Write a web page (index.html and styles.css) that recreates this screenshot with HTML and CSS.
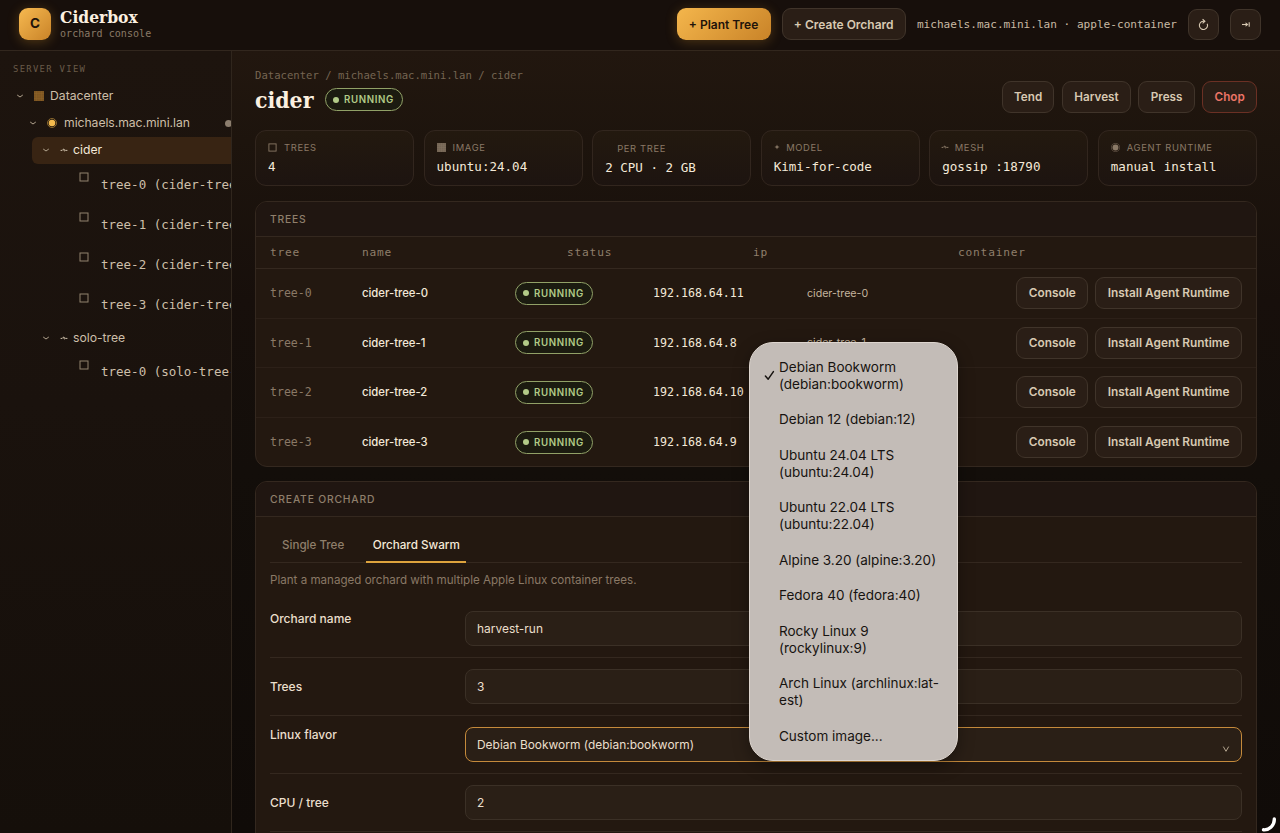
FILE: index.html
```html
<!DOCTYPE html>
<html lang="en">
<head>
<meta charset="utf-8">
<title>Ciderbox</title>
<link rel="stylesheet" href="styles.css">
</head>
<body>
<svg class="defs" width="0" height="0">
  <symbol id="chev" viewBox="0 0 8 8"><path d="M1.2 3 4 5 6.8 3" fill="none" stroke="currentColor" stroke-width="1"/></symbol>
  <symbol id="box" viewBox="0 0 10 10"><rect x="1" y="1" width="8" height="8" fill="none" stroke="currentColor" stroke-width="1"/></symbol>
  <symbol id="grid" viewBox="0 0 10 10"><rect width="10" height="10" fill="currentColor" opacity=".8"/><path d="M0 2.5H10M0 5H10M0 7.5H10M2.5 0V10M5 0V10M7.5 0V10" stroke="currentColor" stroke-width=".6" opacity=".7"/></symbol>
  <symbol id="wave" viewBox="0 0 8 8"><path d="M.6 4.4H2.2L3 3.4 4.6 4.9 5.4 4.4H7.4M3.4 3 5 4.2" fill="none" stroke="currentColor" stroke-width="1"/></symbol>
  <symbol id="orb" viewBox="0 0 10 10"><circle cx="5" cy="5" r="4.5" fill="none" stroke="currentColor" stroke-width=".8" opacity=".65"/><circle cx="5" cy="5" r="3.3" fill="currentColor"/></symbol>
  <symbol id="star" viewBox="0 0 8 8"><path d="M4 1.4 4.7 3.3 6.6 4 4.7 4.7 4 6.6 3.3 4.7 1.4 4 3.3 3.3Z" fill="currentColor"/></symbol>
</svg>
<header class="topbar">
  <div class="logo">C</div>
  <div class="brand"><div class="brand-name">Ciderbox</div><div class="brand-sub">orchard console</div></div>
  <div class="top-actions">
    <button class="btn primary">+ Plant Tree</button>
    <button class="btn create">+ Create Orchard</button>
    <span class="host">michaels.mac.mini.lan · apple-container</span>
    <button class="btn icon"><svg width="13" height="13" viewBox="0 0 13 13"><path d="M10.2 5.7A4.1 4.1 0 1 1 6 3.3H7.6M5.6 1.1 7.9 3.3 5.6 5.4" fill="none" stroke="currentColor" stroke-width="1.1"/></svg></button>
    <button class="btn icon"><svg width="10" height="10" viewBox="0 0 10 10"><path d="M1 5.5H6" fill="none" stroke="currentColor" stroke-width="1.1"/><path d="M4.6 3.2 7.4 5.5 4.6 7.8Z" fill="currentColor"/><path d="M8.2 3.2V7.8" stroke="currentColor" stroke-width="1.1"/></svg></button>
  </div>
</header>
<div class="shell">
  <aside class="sidebar">
    <div class="side-title">SERVER VIEW</div>
    <div class="node l0"><svg class="chev"><use href="#chev"/></svg><svg class="ico amber"><use href="#grid"/></svg><span>Datacenter</span></div>
    <div class="node l1"><svg class="chev"><use href="#chev"/></svg><svg class="ico sun"><use href="#orb"/></svg><span>michaels.mac.mini.lan</span><i class="state"></i></div>
    <div class="node l2 selected"><svg class="chev"><use href="#chev"/></svg><svg class="wave"><use href="#wave"/></svg><span>cider</span></div>
    <div class="leaf"><svg><use href="#box"/></svg><span>tree-0 (cider-tree-0)</span></div>
    <div class="leaf"><svg><use href="#box"/></svg><span>tree-1 (cider-tree-1)</span></div>
    <div class="leaf"><svg><use href="#box"/></svg><span>tree-2 (cider-tree-2)</span></div>
    <div class="leaf"><svg><use href="#box"/></svg><span>tree-3 (cider-tree-3)</span></div>
    <div class="node l2"><svg class="chev"><use href="#chev"/></svg><svg class="wave"><use href="#wave"/></svg><span>solo-tree</span></div>
    <div class="leaf"><svg><use href="#box"/></svg><span>tree-0 (solo-tree-0)</span></div>
  </aside>
  <main class="content">
    <div class="page-head">
      <div>
        <div class="crumbs">Datacenter / michaels.mac.mini.lan / cider</div>
        <div class="title-row"><h1>cider</h1><span class="badge">RUNNING</span></div>
      </div>
      <div class="page-actions"><button class="btn">Tend</button><button class="btn">Harvest</button><button class="btn">Press</button><button class="btn danger">Chop</button></div>
    </div>
    <div class="stats">
      <div class="stat"><div class="stat-label"><svg><use href="#box"/></svg>TREES</div><div class="stat-value">4</div></div>
      <div class="stat"><div class="stat-label"><svg><use href="#grid"/></svg>IMAGE</div><div class="stat-value">ubuntu:24.04</div></div>
      <div class="stat low"><div class="stat-label"><svg></svg>PER TREE</div><div class="stat-value">2 CPU · 2 GB</div></div>
      <div class="stat"><div class="stat-label"><svg class="narrow"><use href="#star"/></svg>MODEL</div><div class="stat-value">Kimi-for-code</div></div>
      <div class="stat"><div class="stat-label"><svg class="narrow"><use href="#wave"/></svg>MESH</div><div class="stat-value">gossip :18790</div></div>
      <div class="stat"><div class="stat-label"><svg><use href="#orb"/></svg>AGENT RUNTIME</div><div class="stat-value">manual install</div></div>
    </div>
    <section class="panel trees">
      <h2>TREES</h2>
      <div class="thead"><span>tree</span><span>name</span><span>status</span><span>ip</span><span>container</span></div>
      <div class="trow"><span class="id">tree-0</span><span class="name">cider-tree-0</span><span><b class="badge">RUNNING</b></span><span class="ip">192.168.64.11</span><span class="cont">cider-tree-0</span><span class="acts"><button class="btn">Console</button><button class="btn">Install Agent Runtime</button></span></div>
      <div class="trow"><span class="id">tree-1</span><span class="name">cider-tree-1</span><span><b class="badge">RUNNING</b></span><span class="ip">192.168.64.8</span><span class="cont">cider-tree-1</span><span class="acts"><button class="btn">Console</button><button class="btn">Install Agent Runtime</button></span></div>
      <div class="trow"><span class="id">tree-2</span><span class="name">cider-tree-2</span><span><b class="badge">RUNNING</b></span><span class="ip">192.168.64.10</span><span class="cont">cider-tree-2</span><span class="acts"><button class="btn">Console</button><button class="btn">Install Agent Runtime</button></span></div>
      <div class="trow"><span class="id">tree-3</span><span class="name">cider-tree-3</span><span><b class="badge">RUNNING</b></span><span class="ip">192.168.64.9</span><span class="cont">cider-tree-3</span><span class="acts"><button class="btn">Console</button><button class="btn">Install Agent Runtime</button></span></div>
    </section>
    <section class="panel create-panel">
      <h2>CREATE ORCHARD</h2>
      <div class="form">
        <div class="tabs"><span class="tab">Single Tree</span><span class="tab active">Orchard Swarm</span></div>
        <p class="hint">Plant a managed orchard with multiple Apple Linux container trees.</p>
        <div class="field top"><label>Orchard name</label><div class="input">harvest-run</div></div>
        <div class="field"><label>Trees</label><div class="input">3</div></div>
        <div class="field top"><label>Linux flavor</label><div class="input focus">Debian Bookworm (debian:bookworm)<svg width="8" height="8" viewBox="0 0 8 8"><path d="M1.3 1.6 4 6.3 6.7 1.6" fill="none" stroke="currentColor" stroke-width="1"/></svg></div></div>
        <div class="field"><label>CPU / tree</label><div class="input">2</div></div>
      </div>
    </section>
  </main>
</div>
<div class="menu">
  <div class="option"><svg class="check" width="11" height="11" viewBox="0 0 11 11"><path d="M1.4 6 4.2 9.2 9.4 1.6" fill="none" stroke="#171310" stroke-width="1.5" stroke-linecap="round" stroke-linejoin="round"/></svg>Debian Bookworm<br>(debian:bookworm)</div>
  <div class="option">Debian 12 (debian:12)</div>
  <div class="option">Ubuntu 24.04 LTS<br>(ubuntu:24.04)</div>
  <div class="option">Ubuntu 22.04 LTS<br>(ubuntu:22.04)</div>
  <div class="option">Alpine 3.20 (alpine:3.20)</div>
  <div class="option">Fedora 40 (fedora:40)</div>
  <div class="option">Rocky Linux 9<br>(rockylinux:9)</div>
  <div class="option">Arch Linux (archlinux:lat-<br>est)</div>
  <div class="option">Custom image...</div>
</div>
<svg class="corner" width="18" height="20" viewBox="0 0 18 20"><path d="M3.5 14.8C9.5 15.3 14.6 10 14.3 4" fill="none" stroke="#fff" stroke-width="3.4" stroke-linecap="round"/></svg>
</body>
</html>
```
FILE: styles.css
```css
* { box-sizing: border-box; }
html, body { height: 100%; }
body {
  margin: 0;
  overflow: hidden;
  display: flex;
  flex-direction: column;
  background: #140e0a;
  color: #f4e9d8;
  font: 11.8px Inter, sans-serif;
}
h1, h2, p { margin: 0; }
svg { display: block; flex: none; }
.defs { position: absolute; }

.topbar {
  height: 51px;
  flex: none;
  display: flex;
  align-items: center;
  padding: 0 19px 2px;
  background: #170f0b;
  border-bottom: 1px solid #32271e;
}
.logo {
  width: 32px;
  height: 32px;
  border-radius: 9px;
  background: linear-gradient(135deg, #f6b950, #c98328);
  box-shadow: 0 2px 12px rgba(232, 160, 48, .28);
  color: #21130a;
  font-size: 13.5px;
  font-weight: 700;
  line-height: 31px;
  text-align: center;
}
.brand { margin-left: 9px; }
.brand-name { font: bold 17.3px/19px "DejaVu Serif Condensed", "DejaVu Serif", serif; font-stretch: condensed; color: #fbf0e0; }
.brand-sub { font: 10px/13px "DejaVu Sans Mono", monospace; color: #8a7a67; letter-spacing: .06px; }
.top-actions { margin-left: auto; display: flex; align-items: center; }
.host { margin: 0 11px; font: 11.08px "DejaVu Sans Mono", monospace; color: #c9baa4; }

.btn {
  height: 32px;
  padding: 0 11.3px;
  border: 1px solid #40342a;
  border-radius: 9px;
  background: #2a1e16;
  color: #d8c9b2;
  font: 600 11.7px Inter, sans-serif;
  white-space: nowrap;
}
.topbar .btn { font-size: 12px; }
.btn.primary {
  border: 0;
  padding: 0 12.3px;
  margin-right: 11px;
  background: linear-gradient(135deg, #f4b64c, #c98328);
  box-shadow: 0 2px 12px rgba(232, 160, 48, .25);
  color: #21130a;
}
.btn.icon {
  width: 31px;
  height: 31px;
  padding: 0;
  display: grid;
  place-items: center;
}
.btn.icon + .btn.icon { margin-left: 11px; }
.btn.danger { border-color: #6b3024; color: #ec7466; }

.shell { flex: 1; min-height: 0; display: flex; }
.sidebar {
  width: 232px;
  flex: none;
  overflow: hidden;
  padding: 11px 0 0 13px;
  background: linear-gradient(#1d140e, #1a120d 45%, #150f0a);
  border-right: 1px solid #30261d;
  color: #cdbfa9;
}
.side-title { font: 8.9px/14px "DejaVu Sans Mono", monospace; letter-spacing: 1.31px; color: #695a49; margin-bottom: 6.5px; }
.node { height: 27px; display: flex; align-items: center; font-size: 12.2px; white-space: nowrap; border-radius: 6px 0 0 6px; }
.node span { padding-bottom: 1px; }
.node svg.chev { width: 8px; height: 8px; color: #b3a48e; }
.node svg.ico { width: 10px; height: 10px; margin: 0 6px 0 10px; }
.node svg.sun { margin-right: 7px; }
.amber { color: #966728; }
.sun { color: #f3ba4e; }
.wave { width: 8px; height: 8px; margin: 0 5px 0 10px; color: #cdbfa9; }
.l0 { padding-left: 3px; }
.l1 { padding-left: 16px; letter-spacing: -.05px; }
.l2 { margin-left: 19px; padding-left: 10px; }
.l0 span, .l1 span { flex: none; }
.state { width: 7px; height: 7px; border-radius: 50%; background: #8c7e6e; margin-left: 35px; flex: none; }
.selected { background: #382413; color: #f4e9d8; }
.leaf { height: 40.2px; display: flex; align-items: center; padding-left: 66px; white-space: nowrap; font: 12.5px "DejaVu Sans Mono", monospace; }
.leaf svg { width: 10px; height: 10px; margin: 0 12px 13px 0; color: #92836f; }
.leaf span { padding-top: 1px; }

.content {
  flex: 1;
  min-width: 0;
  padding: 17px 23px 0 23px;
  background: linear-gradient(#22170f 0, #1d140d 90px, #170f0b 250px, #130e0a 420px, #100b08);
}
.page-head { display: flex; justify-content: space-between; height: 62px; }
.crumbs { font: 10.6px/15px "DejaVu Sans Mono", monospace; color: #756552; }
.title-row { display: flex; align-items: center; height: 33px; gap: 11px; }
h1 { width: 59px; font: bold 22.8px "DejaVu Serif Condensed", "DejaVu Serif", serif; font-stretch: condensed; color: #fbf0e0; }
.badge {
  display: inline-flex;
  align-items: center;
  width: 78px;
  height: 23px;
  padding: 0 0 0 7px;
  gap: 5px;
  border: 1px solid #91a167;
  border-radius: 12px;
  background: #1b1b10;
  color: #b2cb88;
  font: 600 9.7px Inter, sans-serif;
  letter-spacing: .65px;
}
.badge::before { content: ""; width: 6px; height: 6px; border-radius: 50%; background: #b2cb88; }
.page-actions { display: flex; gap: 7.5px; padding-top: 13px; }

.stats { display: grid; grid-template-columns: repeat(6, 1fr); gap: 9.4px; }
.stat { height: 56px; padding: 10px 12px 0; border: 1px solid #32261e; border-radius: 11px; background: linear-gradient(#23190f, #1d1410); }
.stat.low { padding-top: 11px; }
.stat-label { display: flex; align-items: center; height: 12px; font-size: 9.4px; letter-spacing: .65px; color: #8a7966; }
.stat-label svg { width: 9px; height: 9px; margin-right: 7px; }
.stat.low .stat-label svg { margin-right: 3px; }
.stat-label svg.narrow { width: 8px; height: 8px; margin-right: 5.5px; margin-left: -1px; }
.stat-value { margin-top: 6px; font: 12.55px/15px "DejaVu Sans Mono", monospace; }

.panel { border: 1px solid #34281f; border-radius: 12px; background: #231810; overflow: hidden; }
.panel h2 { height: 35px; padding: 0 14px; background: #201611; border-bottom: 1px solid #34281f; font: 500 10.3px/34px Inter, sans-serif; letter-spacing: .82px; color: #8f7f6b; }
.trees { height: 266px; margin-top: 15px; }
.thead { display: grid; grid-template-columns: 92px 205px 186px 205px 1fr; height: 32px; padding: 0 14px; border-bottom: 1px solid #34281f; font: 11.2px/32px "DejaVu Sans Mono", monospace; letter-spacing: .8px; color: #8f7f6b; }
.trow { display: grid; grid-template-columns: 92px 153px 138px 154px 100px 1fr; align-items: center; height: 49.5px; padding: 0 14px; border-bottom: 1px solid #2c2018; }
.trow:last-child { border-bottom: 0; }
.trow > span { display: flex; align-items: center; }
.trow .id { font: 11.55px "DejaVu Sans Mono", monospace; color: #8a7966; }
.name { font-weight: 500; font-size: 11.3px; }
.trow .ip { font: 11.6px "DejaVu Sans Mono", monospace; }
.cont { font-size: 10.65px; color: #c4b49d; }
.trow .acts { justify-content: flex-end; gap: 7px; }
.trow .btn { padding: 0 11.5px; font-size: 11.85px; }

.create-panel { margin-top: 14px; height: 380px; }
.form { padding: 12px 14px 0; }
.tabs { display: flex; height: 34px; border-bottom: 1px solid #34281f; }
.tab { padding: 0 12px; line-height: 33px; font-size: 11.6px; font-weight: 500; color: #8f7f6b; height: 34px; }
.tab.active { margin-left: 10px; padding: 0 6.5px; border-bottom: 2px solid #dda33d; color: #f4e9d8; font-size: 11.7px; }
.hint { height: 37px; line-height: 35px; font-size: 11.6px; color: #8a7966; }
.field { display: grid; grid-template-columns: 194.5px 1fr; align-items: center; height: 58px; padding: 11px 0; border-bottom: 1px solid #34281f; }
.field label { font-size: 12px; font-weight: 500; color: #ebdfcc; }
.field.top label { align-self: start; }
.input { display: flex; align-items: center; justify-content: space-between; height: 35px; padding: 0 11.5px; border: 1px solid #3b3026; border-radius: 8px; background: #2a1f16; font-size: 11.95px; color: #ebdfcc; }
.input.focus { border-color: #c58a3b; }
.input svg { margin-top: 8px; color: #b3a48e; }

.menu {
  position: absolute;
  left: 749px;
  top: 342px;
  width: 209px;
  height: 419px;
  padding: 6.25px 0;
  border: 1px solid #ddd5ce;
  border-radius: 24px;
  background: #c3bcb7;
  box-shadow: 0 5px 16px rgba(0, 0, 0, .35);
  color: #171310;
  font: 13.52px/17px Inter, sans-serif;
}
.option { position: relative; padding: 9.25px 0 9.25px 29px; white-space: nowrap; }
.check { position: absolute; left: 14px; top: 21px; }
.corner { position: absolute; right: 2px; bottom: -2px; }
```
